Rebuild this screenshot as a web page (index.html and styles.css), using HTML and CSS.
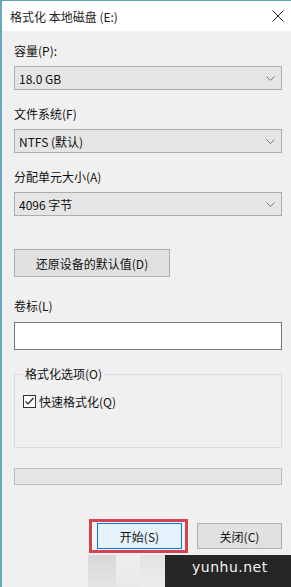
FILE: index.html
```html
<!DOCTYPE html>
<html lang="zh-CN">
<head>
    <meta charset="UTF-8">
    <title>格式化 本地磁盘 (E:)</title>
    <link rel="stylesheet" href="styles.css">
</head>
<body>
    <div class="window">
        <div class="titlebar">
            <span class="title">格式化 本地磁盘 (E:)</span>
            <svg class="close" width="12" height="12" viewBox="0 0 12 12">
                <path d="M0.5 0.5 L11.5 11.5 M11.5 0.5 L0.5 11.5" stroke="#222" stroke-width="1" fill="none"/>
            </svg>
        </div>
        <div class="content">
            <div class="label first">容量(P):</div>
            <div class="select"><span>18.0 GB</span><svg class="chev" width="9" height="5" viewBox="0 0 9 5"><path d="M0.5 0.5 L4.5 4.5 L8.5 0.5" stroke="#777" fill="none"/></svg></div>

            <div class="label">文件系统(F)</div>
            <div class="select"><span>NTFS (默认)</span><svg class="chev" width="9" height="5" viewBox="0 0 9 5"><path d="M0.5 0.5 L4.5 4.5 L8.5 0.5" stroke="#777" fill="none"/></svg></div>

            <div class="label">分配单元大小(A)</div>
            <div class="select"><span>4096 字节</span><svg class="chev" width="9" height="5" viewBox="0 0 9 5"><path d="M0.5 0.5 L4.5 4.5 L8.5 0.5" stroke="#777" fill="none"/></svg></div>

            <button class="btn restore">还原设备的默认值(D)</button>

            <div class="label vol">卷标(L)</div>
            <div class="input"></div>

            <fieldset class="group">
                <legend>格式化选项(O)</legend>
                <label class="check">
                    <svg width="13" height="13" viewBox="0 0 13 13">
                        <rect x="0.5" y="0.5" width="12" height="12" fill="#fff" stroke="#333"/>
                        <path d="M2.5 6.5 L5 9 L10.5 3" stroke="#222" stroke-width="1.2" fill="none"/>
                    </svg>
                    快速格式化(Q)
                </label>
            </fieldset>

            <div class="progress"></div>

            <div class="actions">
                <span class="highlight"><button class="btn primary">开始(S)</button></span>
                <button class="btn">关闭(C)</button>
            </div>
        </div>
        <div class="watermark">
            <span class="blur b1"></span>
            <span class="blur b2"></span>
            <span class="blur b3"></span>
            <span class="mark">yunhu.net</span>
        </div>
    </div>
</body>
</html>
```

FILE: styles.css
```css
body {
    margin: 0;
    padding: 0;
    font-family: "Noto Sans CJK SC", "Noto Sans", sans-serif;
    font-size: 12px;
    color: #111;
    background-color: #f0f0f0;
}
.window {
    width: 289px;
    height: 586px;
    border-top: 1px solid #5d9db3;
    border-left: 2px solid #6aa9bd;
    background-color: #f0f0f0;
    display: flex;
    flex-direction: column;
    overflow: hidden;
}
.titlebar {
    height: 31px;
    background-color: #fff;
    display: flex;
    align-items: center;
    justify-content: space-between;
    padding: 0 7px 0 8px;
}
.title {
    font-size: 12px;
    color: #222;
}
.close {
    margin-top: -1px;
}
.content {
    padding: 0 9px 0 12px;
    display: flex;
    flex-direction: column;
}
.label {
    line-height: 16px;
    margin-top: 16px;
}
.label.first {
    margin-top: 12px;
}
.label.vol {
    margin-top: 21px;
}
.select {
    margin-top: 7px;
    height: 22px;
    border: 1px solid #adadad;
    background-color: #e5e5e5;
    display: flex;
    align-items: center;
    justify-content: space-between;
    padding: 0 6px 0 4px;
}
.chev {
    margin-top: 1px;
}
.btn {
    font-family: inherit;
    font-size: 12px;
    color: #111;
    border: 1px solid #adadad;
    background-color: #e1e1e1;
    padding: 0;
    height: 26px;
    width: 85px;
}
.restore {
    margin-top: 33px;
    width: 156px;
    height: 28px;
    align-self: flex-start;
}
.input {
    margin-top: 8px;
    height: 26px;
    border: 1px solid #7a7a7a;
    background-color: #fff;
}
.group {
    margin: 16px 0 0 0;
    padding: 11px 8px 0 8px;
    height: 69px;
    border: 1px solid #dcdcdc;
}
.group legend {
    padding: 0 2px;
    margin-left: 0;
    line-height: 16px;
}
.check {
    display: flex;
    align-items: center;
    gap: 3px;
}
.progress {
    margin-top: 20px;
    height: 15px;
    border: 1px solid #bcbcbc;
    background-color: #e6e6e6;
}
.actions {
    margin-top: 34px;
    display: flex;
    justify-content: flex-end;
    align-items: center;
    gap: 12px;
}
.highlight {
    border: 3px solid #d6444f;
    padding: 1px 3px 1px 5px;
    margin-right: -3px;
    background-color: #f6f6f6;
    display: flex;
}
.primary {
    border-color: #0078d7;
    background-color: #e5f1fb;
}
.watermark {
    margin-top: 2px;
    display: flex;
    height: 32px;
    padding-left: 86px;
}
.blur {
    display: block;
    height: 32px;
}
.b1 {
    width: 28px;
    background: linear-gradient(#d8d8d8, #e4e4e4);
}
.b2 {
    width: 24px;
    background: linear-gradient(#f0f0f0, #e8e8e8);
}
.b3 {
    width: 25px;
    background: linear-gradient(#e2e2e2, #ececec);
}
.mark {
    flex: 1;
    background-color: #262626;
    color: #f4f4f4;
    font-family: "DejaVu Sans", sans-serif;
    font-size: 14px;
    letter-spacing: 0.5px;
    padding: 4px 0 0 27px;
    box-sizing: border-box;
}
```
